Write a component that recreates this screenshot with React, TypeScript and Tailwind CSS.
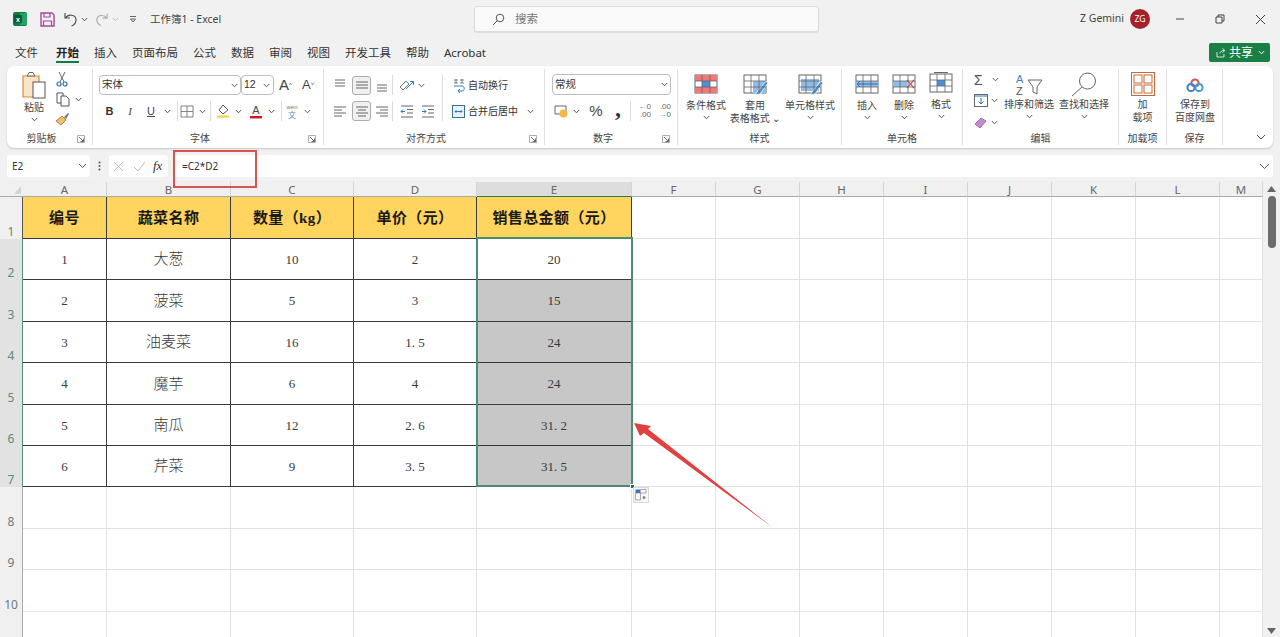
import React from "react";

const Chev = ({ c = "#555" }: { c?: string }) => (
  <svg width="7" height="5" viewBox="0 0 7 5"><path d="M0.8 1 L3.5 3.8 L6.2 1" fill="none" stroke={c} strokeWidth="1" /></svg>
);

const Launcher = () => (
  <svg width="8" height="8" viewBox="0 0 8 8"><path d="M0.5 7.5V0.5H7.5V7.5Z" fill="none" stroke="#999" strokeWidth="0.8" /><path d="M2 2L6.5 6.5M6.5 3.5V6.5H3.5" fill="none" stroke="#555" strokeWidth="0.9" /></svg>
);

const Lines = ({ y, x }: { y: number[]; x: [number, number][] }) => (
  <svg width="14" height="14" viewBox="0 0 14 14">
    {y.map((v, i) => (
      <line key={i} x1={x[i][0]} x2={x[i][1]} y1={v} y2={v} stroke="#666" strokeWidth="1" />
    ))}
  </svg>
);

function Group({ w, label, launcher, children }: { w: string; label: string; launcher?: boolean; children: React.ReactNode }) {
  return (
    <div className={`${w} shrink-0 h-full flex flex-col border-r border-[#e1e1e1]`}>
      <div className="flex-1 min-h-0">{children}</div>
      <div className="h-[15px] pt-[2px] flex items-center text-[10px] leading-[13px] text-[#444]">
        <span className="flex-1 text-center whitespace-nowrap">{label}</span>
        {launcher ? (
          <span className="w-[16px] flex justify-start pl-[1px]"><Launcher /></span>
        ) : null}
      </div>
    </div>
  );
}

const Sep = () => <div className="w-px h-[20px] bg-[#dcdcdc] shrink-0" />;

function BigBtn({ w, icon, lines, chev = true }: { w: string; icon: React.ReactNode; lines: string[]; chev?: boolean }) {
  return (
    <div className={`${w} shrink-0 flex flex-col items-center text-[10px] leading-[12.5px] text-[#444]`}>
      <div className="h-[27px] pt-[1px] flex items-start justify-center">{icon}</div>
      {lines.map((l) => (
        <div key={l} className="whitespace-nowrap flex items-center gap-[1px]">{l}</div>
      ))}
      {chev ? <div className="h-[12px] flex items-center"><Chev /></div> : null}
    </div>
  );
}

const GridIcon = ({ children }: { children?: React.ReactNode }) => (
  <svg width="26" height="22" viewBox="0 0 26 22">
    <rect x="2" y="2" width="22" height="18" fill="#fff" stroke="#666" />
    {children}
    <path d="M2 8H24M2 14H24M9 2V20M17 2V20" stroke="#666" strokeWidth="0.8" fill="none" />
  </svg>
);

const Paint = () => <path d="M15 19L24 8L26 10L18 21L13 22Z" fill="#4a90d9" stroke="#fff" strokeWidth="0.8" />;

const cols = [
  { l: "A", w: "w-[84px]" },
  { l: "B", w: "w-[124px]" },
  { l: "C", w: "w-[123px]" },
  { l: "D", w: "w-[123px]" },
  { l: "E", w: "w-[155px]" },
  { l: "F", w: "w-[84px]" },
  { l: "G", w: "w-[84px]" },
  { l: "H", w: "w-[84px]" },
  { l: "I", w: "w-[84px]" },
  { l: "J", w: "w-[84px]" },
  { l: "K", w: "w-[84px]" },
  { l: "L", w: "w-[84px]" },
  { l: "M", w: "w-[43px]" },
];

const rows = [
  ["1", "大葱", "10", "2", "20"],
  ["2", "菠菜", "5", "3", "15"],
  ["3", "油麦菜", "16", "1.5", "24"],
  ["4", "魔芋", "6", "4", "24"],
  ["5", "南瓜", "12", "2.6", "31.2"],
  ["6", "芹菜", "9", "3.5", "31.5"],
];

const head = ["编号", "蔬菜名称", "数量（kg）", "单价（元）", "销售总金额（元）"];

function Num({ v }: { v: string }) {
  const p = v.split(".");
  if (p.length === 1) return <>{v}</>;
  return (
    <>
      {p[0]}
      <span className="inline-block w-[6.5px]">.</span>
      {p[1]}
    </>
  );
}

const tabs = ["文件", "开始", "插入", "页面布局", "公式", "数据", "审阅", "视图", "开发工具", "帮助", "Acrobat"];

export default function App() {
  return (
    <div className="relative w-[1280px] h-[637px] overflow-hidden bg-[#f1f1f1] text-[#333] font-['Noto_Sans','Noto_Sans_CJK_SC',sans-serif]">
      {/* Title bar */}
      <div className="h-[38px] flex items-center">
        <div className="w-[474px] shrink-0 flex items-center pl-[13px]">
          <svg width="14" height="14" viewBox="0 0 14 14">
            <rect width="14" height="14" rx="2" fill="#107c41" />
            <rect x="7" y="1" width="7" height="12" fill="#21a366" />
            <rect x="1" y="3" width="8" height="8" rx="1" fill="#0b5c30" />
            <text x="5" y="9.5" fontSize="7" fontWeight="700" fill="#fff" textAnchor="middle" fontFamily="Liberation Sans">x</text>
          </svg>
          <svg className="ml-[13px]" width="15" height="15" viewBox="0 0 15 15">
            <path d="M1 1H12L14 3V14H1Z" fill="none" stroke="#a5479d" strokeWidth="1.4" />
            <path d="M4 1V5H10V1M3.5 14V9H11.5V14" fill="none" stroke="#a5479d" strokeWidth="1.2" />
          </svg>
          <svg className="ml-[8px]" width="15" height="15" viewBox="0 0 15 15">
            <path d="M2 1V6H7M2.5 6C5 2 13 2 13 8C13 11 11 13 8.5 14" fill="none" stroke="#555" strokeWidth="1.2" />
          </svg>
          <span className="ml-[3px] w-[8px] flex"><Chev /></span>
          <svg className="ml-[6px]" width="14" height="15" viewBox="0 0 15 15">
            <path d="M13 1V6H8M12.5 6C10 2 2 2 2 8C2 11 4 13 6.5 14" fill="none" stroke="#aaa" strokeWidth="1.2" />
          </svg>
          <span className="ml-[3px] w-[8px] flex"><Chev c="#bbb" /></span>
          <svg className="ml-[9px]" width="8" height="8" viewBox="0 0 8 8">
            <path d="M1 1.5H7M1.5 4H6.5L4 7Z" fill="none" stroke="#555" strokeWidth="0.9" />
          </svg>
          <span className="ml-[13px] mt-[1px] text-[10.5px] text-[#444] whitespace-nowrap">工作簿1 - Excel</span>
        </div>
        <div className="w-[345px] h-[26px] shrink-0 bg-[#fafafa] border border-[#dcdcdc] rounded-[3px] shadow-[0_1px_1px_rgba(0,0,0,0.08)] flex items-center pl-[17px]">
          <svg width="13" height="13" viewBox="0 0 13 13">
            <circle cx="8" cy="5" r="3.8" fill="none" stroke="#555" strokeWidth="1" />
            <path d="M5.2 7.8L1 12" stroke="#555" strokeWidth="1" />
          </svg>
          <span className="ml-[10px] text-[11.5px] text-[#777]">搜索</span>
        </div>
        <div className="flex-1 flex items-center pl-[261px]">
          <span className="text-[10.5px] text-[#444] whitespace-nowrap w-[50px]">Z Gemini</span>
          <div className="w-[20px] h-[20px] rounded-full bg-[#a6222b] text-white text-[8.5px] flex items-center justify-center">ZG</div>
          <svg className="ml-[25px]" width="10" height="10" viewBox="0 0 10 10"><path d="M1 5H9" stroke="#444" strokeWidth="1" /></svg>
          <svg className="ml-[30px]" width="10" height="10" viewBox="0 0 10 10"><path d="M1 3H7V9H1ZM3 3V1H9V7H7" fill="none" stroke="#444" strokeWidth="1" /></svg>
          <svg className="ml-[30px]" width="11" height="11" viewBox="0 0 11 11"><path d="M1 1L10 10M10 1L1 10" stroke="#444" strokeWidth="1" /></svg>
        </div>
      </div>

      {/* Tabs */}
      <div className="h-[28px] flex items-start pl-[15px] pr-[10px]">
        <div className="flex gap-[15px] text-[11.5px] leading-[30px] text-[#333]">
          {tabs.map((t) =>
            t === "开始" ? (
              <div key={t} className="ml-[3px] relative font-bold text-[#222] h-[25px] border-b-2 border-[#107c41] leading-[30px]">{t}</div>
            ) : (
              <div key={t} className="h-[28px]">{t}</div>
            )
          )}
        </div>
        <div className="ml-auto mt-[5px] w-[61px] h-[19px] rounded-[2px] bg-[#1a7f45] text-white flex items-center pl-[7px] text-[12px]">
          <svg width="10" height="10" viewBox="0 0 10 10"><path d="M1 4V9H8V6M4 5.5C4 3.5 6 2.5 8 2.5M6.5 0.5L9 2.5L6.5 4.5" fill="none" stroke="#fff" strokeWidth="0.8" /></svg>
          <span className="ml-[3px]">共享</span>
          <span className="ml-[5px] flex"><Chev c="#fff" /></span>
        </div>
      </div>

      {/* Ribbon */}
      <div className="mx-[7px] h-[82px] bg-white rounded-[7px] shadow-[0_1px_2px_rgba(0,0,0,0.18)] flex py-[3px] text-[#444]">
        <Group w="w-[86px]" label="剪贴板" launcher>
          <div className="flex h-full">
            <div className="ml-[7px] w-[40px] flex flex-col items-center text-[10px] leading-[12px]">
              <svg className="mt-[2px]" width="24" height="29" viewBox="0 0 24 29">
                <path d="M1 5H17V26H1Z" fill="#fbe3c8" stroke="#d88a3c" strokeWidth="1.2" />
                <path d="M5 5L7 1.5H11L13 5Z" fill="#fff" stroke="#666" strokeWidth="1" />
                <rect x="11" y="11" width="12" height="16" fill="#fff" stroke="#555" strokeWidth="1" />
              </svg>
              <div className="mt-[1px]">粘贴</div>
              <div className="h-[12px] flex items-center"><Chev /></div>
            </div>
            <div className="w-[32px] flex flex-col">
              <div className="h-[20px] flex items-center pl-[1px]">
                <svg width="14" height="16" viewBox="0 0 14 16"><path d="M4 1L9 11M10 1L5 11" stroke="#666" strokeWidth="1" /><circle cx="4" cy="13" r="2" fill="none" stroke="#2f6fb0" strokeWidth="1.2" /><circle cx="10" cy="13" r="2" fill="none" stroke="#2f6fb0" strokeWidth="1.2" /></svg>
              </div>
              <div className="h-[20px] flex items-center pl-[2px]">
                <svg width="14" height="15" viewBox="0 0 14 15"><path d="M1 1H7V11H1Z" fill="#fff" stroke="#555" /><path d="M5 4H10L13 7V14H5Z" fill="#fff" stroke="#555" /></svg>
                <span className="ml-[5px] flex"><Chev /></span>
              </div>
              <div className="h-[20px] flex items-center pl-[1px]">
                <svg width="15" height="14" viewBox="0 0 15 14"><path d="M1 9L7 4L11 8L6 13Z" fill="#f0c070" stroke="#a56a20" strokeWidth="0.8" /><path d="M9 5L13 1L14 2L11 7" fill="#777" /></svg>
              </div>
            </div>
          </div>
        </Group>

        <Group w="w-[231px]" label="字体" launcher>
          <div className="pt-[6px] pl-[6px]">
            <div className="flex items-center h-[20px]">
              <div className="w-[142px] h-[20px] border border-[#bdbdbd] rounded-[4px] flex items-center justify-between pl-[2px] pr-[2px] text-[10.5px] text-[#333]">
                <span>宋体</span><Chev />
              </div>
              <div className="w-[33px] h-[20px] border border-[#bdbdbd] rounded-[4px] flex items-center justify-between pl-[2px] pr-[3px] text-[10.5px] text-[#333] font-['Liberation_Sans',sans-serif]">
                <span>12</span><Chev />
              </div>
              <span className="ml-[5px] w-[14px] text-[15px] leading-[20px] text-[#444] font-['Liberation_Sans',sans-serif] whitespace-nowrap">A<sup className="text-[6px]">^</sup></span>
              <span className="ml-[9px] w-[13px] text-[13px] leading-[20px] text-[#444] font-['Liberation_Sans',sans-serif] whitespace-nowrap">A<sup className="text-[6px]">˅</sup></span>
            </div>
            <div className="flex items-center h-[20px] mt-[6px]">
              <span className="w-[21px] text-center text-[11px] font-bold font-['Liberation_Sans',sans-serif] text-[#333]">B</span>
              <span className="w-[20px] text-center text-[11px] italic font-['Liberation_Serif',serif] text-[#444]">I</span>
              <span className="w-[22px] text-center text-[11px] underline font-['Liberation_Sans',sans-serif] text-[#444]">U</span>
              <span className="w-[10px] flex justify-center"><Chev /></span>
              <span className="w-[5px]" /><Sep /><span className="w-[2px]" />
              <svg width="14" height="13" viewBox="0 0 14 13"><path d="M1 1H13V12H1ZM7 1V12M1 6.5H13" fill="none" stroke="#777" strokeWidth="0.9" /></svg>
              <span className="w-[16px] flex justify-center"><Chev /></span>
              <Sep />
              <svg className="ml-[5px]" width="14" height="14" viewBox="0 0 14 14"><path d="M7 1L12 6L7 10L3 6Z" fill="#fff" stroke="#555" /><rect x="1" y="11.5" width="12" height="2.2" fill="#f5d34a" /></svg>
              <span className="w-[16px] flex justify-center"><Chev /></span>
              <svg className="ml-[3px]" width="14" height="15" viewBox="0 0 14 15"><text x="7" y="10" fontSize="11" textAnchor="middle" fill="#444" fontFamily="Liberation Sans">A</text><rect x="1" y="12" width="12" height="2.4" fill="#d01818" /></svg>
              <span className="w-[16px] flex justify-center"><Chev /></span>
              <span className="w-[2px]" /><Sep />
              <div className="ml-[4px] w-[12px] flex flex-col items-center leading-[7px]">
                <span className="text-[6px] text-[#777] font-['Liberation_Sans',sans-serif]">wén</span>
                <span className="text-[8px] text-[#5a8fc0]">文</span>
              </div>
              <span className="ml-[3px] w-[12px] flex justify-center"><Chev /></span>
            </div>
          </div>
        </Group>

        <Group w="w-[221px]" label="对齐方式" launcher>
          <div className="flex pt-[6px]">
            <div className="w-[118px] shrink-0">
              <div className="flex items-center h-[20px] pl-[6px]">
                <span className="w-[19px] flex justify-center -mt-[3px]"><Lines y={[3, 6, 9]} x={[[2, 12], [2, 12], [2, 12]]} /></span>
                <span className="ml-[3px] w-[19px] h-[19px] border border-[#adadad] rounded-[3px] bg-[#f0f0f0] flex items-center justify-center"><Lines y={[4, 7, 10]} x={[[1, 13], [1, 13], [1, 13]]} /></span>
                <span className="ml-[1px] w-[19px] flex justify-center mt-[3px]"><Lines y={[5, 8, 11]} x={[[2, 12], [2, 12], [2, 12]]} /></span>
                <span className="w-[1px]" /><Sep />
                <svg className="ml-[6px]" width="15" height="14" viewBox="0 0 15 14"><path d="M1 9L7 3L10 6L4 12Z" fill="none" stroke="#777" /><path d="M7 11L14 4M11 3.5H14.5V7" fill="none" stroke="#2f7fc0" /></svg>
                <span className="ml-[4px] flex"><Chev /></span>
              </div>
              <div className="flex items-center h-[20px] mt-[6px] pl-[6px]">
                <span className="w-[19px] flex justify-center"><Lines y={[3, 6, 9, 12]} x={[[1, 13], [1, 9], [1, 13], [1, 9]]} /></span>
                <span className="ml-[3px] w-[19px] h-[20px] border border-[#adadad] rounded-[3px] bg-[#f0f0f0] flex items-center justify-center"><Lines y={[3, 6, 9, 12]} x={[[1, 13], [3, 11], [1, 13], [3, 11]]} /></span>
                <span className="ml-[1px] w-[19px] flex justify-center"><Lines y={[3, 6, 9, 12]} x={[[1, 13], [5, 13], [1, 13], [5, 13]]} /></span>
                <span className="w-[1px]" /><Sep />
                <svg className="ml-[7px]" width="14" height="13" viewBox="0 0 14 13"><path d="M1 1H13M7 4.5H13M7 8H13M1 12H13" stroke="#666" /><path d="M5 6.5H1M3 4.5L1 6.5L3 8.5" fill="none" stroke="#2f7fc0" /></svg>
                <svg className="ml-[7px]" width="14" height="13" viewBox="0 0 14 13"><path d="M1 1H13M7 4.5H13M7 8H13M1 12H13" stroke="#666" /><path d="M1 6.5H5M3 4.5L5 6.5L3 8.5" fill="none" stroke="#2f7fc0" /></svg>
              </div>
            </div>
            <div className="w-px h-[46px] bg-[#e1e1e1] shrink-0" />
            <div className="flex-1 pl-[9px]">
              <div className="flex items-center h-[20px] text-[10px]">
                <svg width="14" height="15" viewBox="0 0 14 15"><path d="M2 2H6M4 1V5M2 5H6" fill="none" stroke="#666" strokeWidth="0.8" /><path d="M8 2H12M10 1V5M8 5H12" fill="none" stroke="#666" strokeWidth="0.8" /><path d="M2 8H10C13 8 13 13 10 13H6M8 11L6 13L8 15" fill="none" stroke="#2f7fc0" /></svg>
                <span className="ml-[2px] text-[#333]">自动换行</span>
              </div>
              <div className="flex items-center h-[20px] mt-[6px] text-[10px]">
                <svg width="13" height="13" viewBox="0 0 13 13"><rect x="0.5" y="0.5" width="12" height="12" fill="#eaf3fb" stroke="#3a6f9a" /><path d="M3 6.5H10M4.5 5L3 6.5L4.5 8M8.5 5L10 6.5L8.5 8" fill="none" stroke="#2f7fc0" /></svg>
                <span className="ml-[3px] text-[#333] whitespace-nowrap">合并后居中</span>
                <span className="ml-[9px] flex"><Chev /></span>
              </div>
            </div>
          </div>
        </Group>

        <Group w="w-[133px]" label="数字" launcher>
          <div className="pt-[5px] pl-[7px]">
            <div className="w-[119px] h-[21px] border border-[#bdbdbd] rounded-[4px] flex items-center justify-between pl-[2px] pr-[2px] text-[10.5px] text-[#333]">
              <span>常规</span><Chev />
            </div>
            <div className="flex items-center h-[20px] mt-[6px]">
              <svg className="ml-[2px]" width="14" height="14" viewBox="0 0 14 14"><path d="M1 2H12V10H1Z" fill="none" stroke="#666" /><circle cx="9.5" cy="9.5" r="4" fill="#f5b942" /></svg>
              <span className="ml-[5px] w-[9px] flex"><Chev /></span>
              <span className="ml-[4px] w-[20px] text-center text-[15px] leading-[20px] text-[#444] font-['Liberation_Sans',sans-serif]">%</span>
              <span className="w-[24px] h-[20px] text-center text-[24px] leading-[14px] font-bold text-[#333] font-['Liberation_Serif',serif]">,</span>
              <Sep />
              <div className="ml-[4px] w-[16px] text-[8px] leading-[8px] text-[#666] font-['Liberation_Sans',sans-serif] text-right"><span className="text-[#2f7fc0]">←</span>0<br />.00</div>
              <div className="ml-[4px] w-[16px] text-[8px] leading-[8px] text-[#666] font-['Liberation_Sans',sans-serif] text-right">.00<br /><span className="text-[#2f7fc0]">→</span>0</div>
            </div>
          </div>
        </Group>

        <Group w="w-[164px]" label="样式">
          <div className="flex pt-[3px]">
            <div className="ml-[6px]">
              <BigBtn w="w-[44px]" lines={["条件格式"]} icon={
                <GridIcon><rect x="2" y="2" width="22" height="6" fill="#f2777a" /><rect x="9" y="8" width="8" height="6" fill="#4a90d9" /><rect x="2" y="14" width="22" height="6" fill="#f2777a" /></GridIcon>
              } />
            </div>
            <div className="ml-[5px]">
              <BigBtn w="w-[44px]" chev={false} lines={["套用", "表格格式 ⌄"]} icon={
                <GridIcon><rect x="11" y="8" width="13" height="12" fill="#8fbdea" /><Paint /></GridIcon>
              } />
            </div>
            <div className="ml-[5px]">
              <BigBtn w="w-[56px]" lines={["单元格样式"]} icon={
                <GridIcon><rect x="4" y="6" width="18" height="12" fill="#8fbdea" /><Paint /></GridIcon>
              } />
            </div>
          </div>
        </Group>

        <Group w="w-[121px]" label="单元格">
          <div className="flex pt-[3px]">
            <div className="ml-[7px]">
              <BigBtn w="w-[36px]" lines={["插入"]} icon={
                <GridIcon><rect x="2" y="8" width="22" height="6" fill="#8fbdea" /><path d="M24 11H3M6 8L3 11L6 14" fill="none" stroke="#2f6fb0" /></GridIcon>
              } />
            </div>
            <div className="ml-[1px]">
              <BigBtn w="w-[36px]" lines={["删除"]} icon={
                <GridIcon><rect x="2" y="8" width="14" height="6" fill="#8fbdea" /><path d="M16 7L23 15M23 7L16 15" stroke="#d9534f" strokeWidth="1.2" /></GridIcon>
              } />
            </div>
            <div className="ml-[1px] -mt-[1px]">
              <BigBtn w="w-[36px]" lines={["格式"]} icon={
                <GridIcon><rect x="9" y="8" width="8" height="6" fill="#4a90d9" /><path d="M6 0.5H20" stroke="#666" /></GridIcon>
              } />
            </div>
          </div>
        </Group>

        <Group w="w-[156px]" label="编辑">
          <div className="flex">
            <div className="w-[38px] shrink-0 pl-[11px]">
              <div className="h-[19px] mt-[1px] flex items-center gap-[5px]">
                <span className="w-[13px] text-[14px] leading-[16px] text-[#555] font-['Liberation_Sans',sans-serif]">Σ</span>
                <Chev />
              </div>
              <div className="h-[22px] flex items-center gap-[3px]">
                <svg width="14" height="13" viewBox="0 0 14 13"><rect x="0.5" y="0.5" width="13" height="12" fill="#fff" stroke="#666" /><rect x="1" y="1" width="12" height="2" fill="#8fbdea" /><path d="M7 4V10M4.5 7.5L7 10L9.5 7.5" fill="none" stroke="#2f6fb0" /></svg>
                <Chev />
              </div>
              <div className="h-[22px] flex items-center gap-[3px]">
                <svg width="14" height="13" viewBox="0 0 14 13"><path d="M1 8L7 2L12 5L6 12Z" fill="#c58ad0" stroke="#8a4a96" strokeWidth="0.7" /></svg>
                <Chev />
              </div>
            </div>
            <div className="pt-[2px]">
              <BigBtn w="w-[56px]" lines={["排序和筛选"]} icon={
                <svg width="28" height="24" viewBox="0 0 28 24"><text x="1" y="11" fontSize="11" fill="#3f7fc0" fontFamily="Liberation Sans">A</text><text x="1" y="23" fontSize="11" fill="#555" fontFamily="Liberation Sans">Z</text><path d="M13 8H27L22 15V22L18 20V15Z" fill="none" stroke="#666" /></svg>
              } />
            </div>
            <div className="pt-[2px]">
              <BigBtn w="w-[54px]" lines={["查找和选择"]} icon={
                <svg width="26" height="25" viewBox="0 0 26 25"><circle cx="16.5" cy="9" r="8" fill="none" stroke="#666" /><path d="M11 15L1 24" stroke="#666" /></svg>
              } />
            </div>
          </div>
        </Group>

        <Group w="w-[48px]" label="加载项">
          <div className="pt-[2px] pl-[5px]">
            <BigBtn w="w-[37px]" chev={false} lines={["加", "载项"]} icon={
              <svg width="24" height="24" viewBox="0 0 24 24"><rect x="0.5" y="0.5" width="23" height="23" fill="none" stroke="#c8693a" /><rect x="3" y="3" width="8" height="8" fill="none" stroke="#c8693a" /><rect x="13" y="3" width="8" height="8" fill="none" stroke="#c8693a" /><rect x="3" y="13" width="8" height="8" fill="none" stroke="#c8693a" /><rect x="13" y="13" width="8" height="8" fill="none" stroke="#c8693a" /></svg>
            } />
          </div>
        </Group>

        <Group w="w-[56px]" label="保存">
          <div className="pt-[2px]">
            <BigBtn w="w-[56px]" chev={false} lines={["保存到", "百度网盘"]} icon={
              <svg className="mt-[6px]" width="18" height="14" viewBox="0 0 18 14"><circle cx="9" cy="5" r="3.6" fill="none" stroke="#d9534f" strokeWidth="2" /><circle cx="5" cy="9.5" r="3.6" fill="none" stroke="#3a7fd0" strokeWidth="2" /><circle cx="13" cy="9.5" r="3.6" fill="none" stroke="#3aa0d0" strokeWidth="2" /></svg>
            } />
          </div>
        </Group>

        <div className="flex-1 flex items-end justify-end pr-[7px] pb-[5px]">
          <svg width="10" height="6" viewBox="0 0 10 6"><path d="M1 1L5 5L9 1" fill="none" stroke="#555" /></svg>
        </div>
      </div>

      {/* Formula bar */}
      <div className="h-[22px] mt-[7px] mx-[7px] flex items-stretch gap-0">
        <div className="w-[83px] bg-white rounded-[3px] flex items-center justify-between pl-[5px] pr-[3px] text-[10px] text-[#333]">
          <span>E2</span><svg width="9" height="6" viewBox="0 0 9 6"><path d="M1 1L4.5 4.5L8 1" fill="none" stroke="#555" /></svg>
        </div>
        <div className="w-[19px] flex items-center justify-center">
          <svg width="3" height="10" viewBox="0 0 3 10"><circle cx="1.5" cy="1.5" r="1" fill="#555" /><circle cx="1.5" cy="5" r="1" fill="#555" /><circle cx="1.5" cy="8.5" r="1" fill="#555" /></svg>
        </div>
        <div className="w-[59px] bg-white rounded-[3px] flex items-center pl-[4px]">
          <svg width="11" height="11" viewBox="0 0 11 11"><path d="M1 1L10 10M10 1L1 10" stroke="#bbb" /></svg>
          <svg className="ml-[9px]" width="13" height="11" viewBox="0 0 13 11"><path d="M1 6L5 10L12 1" fill="none" stroke="#bbb" /></svg>
          <span className="ml-[7px] text-[13px] italic text-[#333] font-['Liberation_Serif',serif]">fx</span>
        </div>
        <div className="ml-[5px] flex-1 bg-white rounded-[3px] flex items-center justify-between pl-[9px] pr-[3px] text-[10px] text-[#333]">
          <span>=C2*D2</span>
          <svg width="11" height="7" viewBox="0 0 11 7"><path d="M1 1L5.5 5.5L10 1" fill="none" stroke="#555" /></svg>
        </div>
      </div>

      {/* Sheet */}
      <div className="mt-[5px] flex">
        <div className="w-[1263px] shrink-0 bg-white">
          <div className="flex h-[15px] bg-[#f0f0f0] text-[11.5px] leading-[15px] text-[#666] font-['Noto_Sans',sans-serif]">
            <div className="w-[23px] flex items-end justify-end pr-[1px] pb-[1px] border-b border-[#aaa]">
              <svg width="8" height="9" viewBox="0 0 8 9"><path d="M7 0V8H0Z" fill="#d4d4d4" /></svg>
            </div>
            {cols.map((c) => (
              <div key={c.l} className={`${c.w} text-center border-r border-[#d4d4d4] ${c.l === "E" ? "bg-[#dcdedd] border-b border-b-[#2f7d57]" : "border-b border-b-[#aaa]"}`}>{c.l}</div>
            ))}
          </div>
          {Array.from({ length: 11 }).map((_, i) => {
            const selected = i >= 1 && i <= 6;
            return (
              <div key={i} className={`flex ${i === 0 ? "h-[42px]" : "h-[41.4px]"}`}>
                <div className={`w-[23px] shrink-0 flex items-end justify-center text-[12px] leading-[14px] border-r font-['Noto_Sans',sans-serif] ${selected ? "bg-[#e2e2e2] text-[#5f8a78] border-[#5f8f7c]" : i === 0 ? "bg-[#f0f0f0] text-[#5f8a78] border-[#555]" : "bg-[#f0f0f0] text-[#777] border-[#aaa]"}`}>{i < 10 ? i + 1 : ""}</div>
                {cols.map((c, j) => {
                  const inTable = i <= 6 && j < 5;
                  const isHead = i === 0 && j < 5;
                  const gray = j === 4 && i >= 2 && i <= 6;
                  const val = inTable && !isHead ? rows[i - 1][j] : "";
                  return (
                    <div key={c.l} className={`${c.w} shrink-0 flex items-center justify-center border-r border-b pt-[1px] ${inTable ? "border-[#3a3a3a]" : "border-[#e2e2e2]"} ${isHead ? "bg-[#ffd45f] text-[15px] font-bold tracking-[0.4px] text-[#1a1a1a] font-['Liberation_Serif','Noto_Sans_CJK_SC',serif]" : "text-[#3a3a3a] font-['Liberation_Serif','Noto_Sans_CJK_SC',serif]"} ${gray ? "bg-[#c7c7c7]" : ""} ${j === 1 && !isHead ? "text-[15px] font-light" : "text-[13px]"} ${isHead ? "!text-[15px]" : ""}`}>
                      {isHead ? head[j] : j === 1 ? val : <Num v={val} />}
                    </div>
                  );
                })}
              </div>
            );
          })}
        </div>
        <div className="flex-1 bg-[#f1f1f1] flex flex-col items-center">
          <svg className="mt-[4px]" width="9" height="6" viewBox="0 0 9 6"><path d="M4.5 0L9 6H0Z" fill="#666" /></svg>
          <div className="mt-[4px] w-[8px] h-[52px] rounded-[4px] bg-[#6c6c6c]" />
          <svg className="mt-[380px]" width="9" height="6" viewBox="0 0 9 6"><path d="M4.5 6L9 0H0Z" fill="#666" /></svg>
        </div>
      </div>

      {/* Overlays */}
      <div className="absolute left-[476px] top-[237px] w-[157px] h-[250px] border-2 border-[#4f8a72]" />
      <div className="absolute left-[173px] top-[150px] w-[84px] h-[38px] border-2 border-[#d9534f]" />
      <div className="absolute left-[630px] top-[484px] w-[5px] h-[5px] bg-[#1f6b45] border border-white" />
      <div className="absolute left-[633px] top-[487px] w-[16px] h-[16px] bg-[#f8f8f8] border border-[#d8d8d8] flex items-center justify-center">
        <svg width="12" height="12" viewBox="0 0 12 12"><rect x="0.5" y="0.5" width="5" height="3.5" fill="#3d6fc4" /><path d="M5.5 0.5H11V4H0.5V11H5.5V4" fill="none" stroke="#888" strokeWidth="0.7" /><circle cx="9" cy="8.5" r="1.5" fill="#888" /></svg>
      </div>
      <svg className="absolute left-[630px] top-[420px]" width="146" height="110" viewBox="630 420 146 110">
        <polygon points="634,423 651,426 648,429 772,527 644,433 640,436" fill="#e2403f" />
      </svg>
    </div>
  );
}
